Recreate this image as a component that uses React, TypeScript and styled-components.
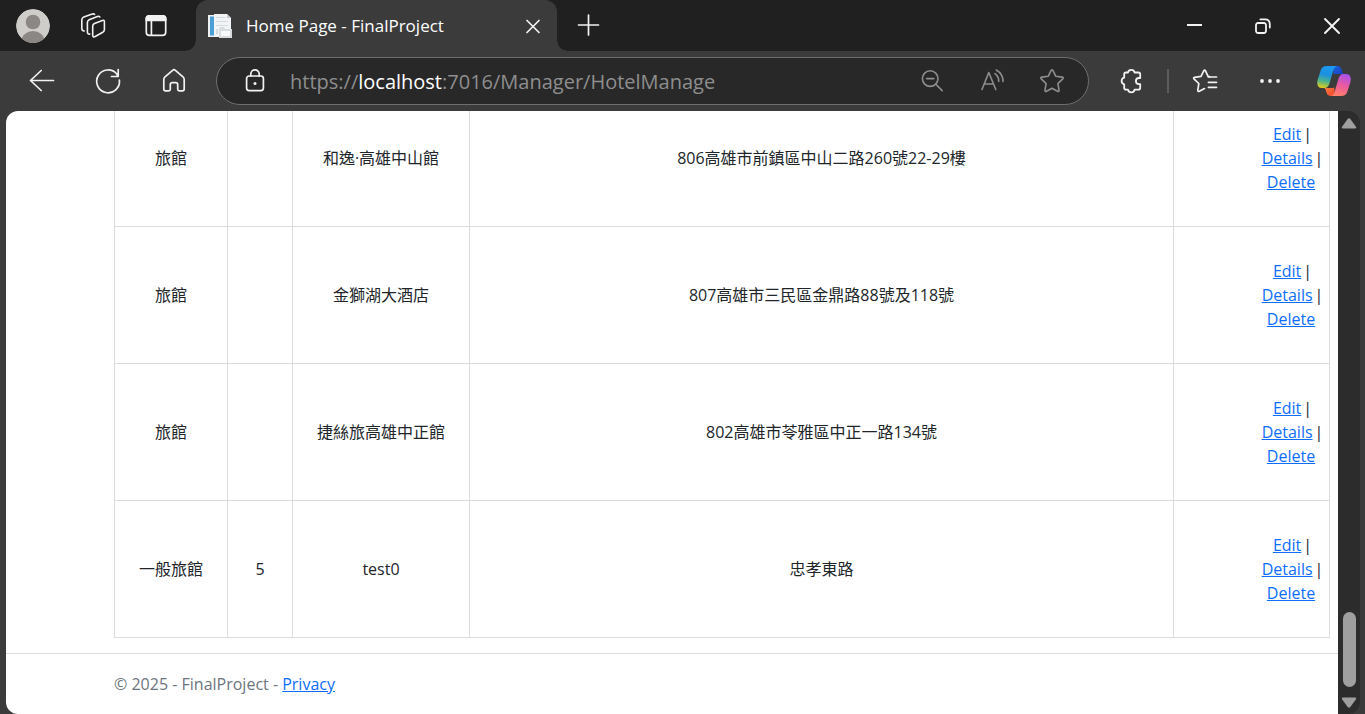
import React from "react";
import styled, { createGlobalStyle } from "styled-components";

const GlobalStyle = createGlobalStyle`
  * { box-sizing: border-box; }
  body {
    margin: 0;
    background: #3b3b3b;
    font-family: "Open Sans", "Noto Sans CJK TC", sans-serif;
    font-size: 16px;
    line-height: 24px;
    color: #212529;
  }
`;

const Browser = styled.div`
  display: flex;
  flex-direction: column;
  height: 100vh;
  overflow: hidden;
  background: #3b3b3b;
`;

const TabStrip = styled.header`
  display: flex;
  align-items: center;
  flex: none;
  height: 51px;
  background: #202020;
`;

const StripTools = styled.div`
  display: flex;
  align-items: center;
  width: 196px;
  height: 51px;
  padding-left: 15px;
  gap: 25px;
`;

const IconButton = styled.button<{ $tone?: string }>`
  display: flex;
  align-items: center;
  justify-content: center;
  flex: none;
  width: 36px;
  height: 36px;
  padding: 0;
  border: 0;
  background: none;
  color: ${(p) => p.$tone ?? "#f2f2f2"};
`;

const Tab = styled.div`
  position: relative;
  display: flex;
  align-items: center;
  width: 361px;
  height: 51px;
  padding: 0 6px;
  border-radius: 12px 12px 0 0;
  background: #3b3b3b;
  &::before,
  &::after {
    content: "";
    position: absolute;
    bottom: 0;
    width: 10px;
    height: 10px;
  }
  &::before {
    left: -10px;
    background: radial-gradient(circle at 0 0, #202020 9px, #3b3b3b 10px);
  }
  &::after {
    right: -10px;
    background: radial-gradient(circle at 100% 0, #202020 9px, #3b3b3b 10px);
  }
`;

const TabTitle = styled.span`
  flex: 1;
  padding-left: 8px;
  font-size: 17px;
  color: #ffffff;
  white-space: nowrap;
`;

const NewTab = styled.div`
  flex: 1;
  padding-left: 14px;
`;

const WindowControls = styled.div`
  display: flex;
  gap: 33px;
  padding-right: 15px;
`;

const Toolbar = styled.nav`
  display: flex;
  align-items: center;
  flex: none;
  height: 60px;
  padding: 0 12px 0 24px;
`;

const NavButtons = styled.div`
  display: flex;
  gap: 30px;
  padding-right: 24px;
`;

const AddressBar = styled.div`
  display: flex;
  align-items: center;
  flex: 1;
  min-width: 0;
  height: 48px;
  padding: 0 18px 0 20px;
  border: 1px solid #6e6e6e;
  border-radius: 24px;
  background: #282828;
`;

const Address = styled.div`
  flex: 1;
  min-width: 0;
  padding: 2px 0 0 17px;
  overflow: hidden;
  font-size: 20px;
  line-height: 28px;
  color: #8e8e8e;
  white-space: nowrap;
`;

const Host = styled.span`
  color: #ffffff;
`;

const AddressTools = styled.div`
  display: flex;
  gap: 24px;
`;

const Extensions = styled.div`
  display: flex;
  align-items: center;
  padding-left: 24px;
`;

const Divider = styled.span`
  width: 2px;
  height: 24px;
  margin: 0 18px;
  background: #5c5c5c;
`;

const MoreTools = styled.div`
  display: flex;
  gap: 29px;
`;

const Viewport = styled.div`
  display: flex;
  flex: 1;
  min-height: 0;
  padding: 0 5px 0 6px;
`;

const Page = styled.div`
  display: flex;
  flex-direction: column;
  justify-content: flex-end;
  flex: 1;
  min-width: 0;
  overflow: hidden;
  border-radius: 12px 0 0 12px;
  background: #ffffff;
`;

const Main = styled.main`
  padding: 0 8px 15px 108px;
`;

const HotelTable = styled.table`
  width: 100%;
  table-layout: fixed;
  border-collapse: collapse;
`;

const Column = styled.col<{ $width?: number }>`
  width: ${(p) => (p.$width ? `${p.$width}px` : "auto")};
`;

const Cell = styled.td`
  padding: 32px 8px;
  border: 1px solid #dcdcdc;
  text-align: center;
  vertical-align: middle;
`;

const Actions = styled.div`
  display: flex;
  flex-direction: column;
  align-items: center;
  width: 60px;
  margin-left: auto;
  white-space: nowrap;
`;

const Separator = styled.span`
  margin: 0 -3px 0 2px;
`;

const Link = styled.a`
  color: #0d6efd;
  text-decoration: underline;
`;

const Footer = styled.footer`
  padding-left: 108px;
  border-top: 1px solid #dcdcdc;
  line-height: 60px;
  color: #6c757d;
`;

const ScrollTrack = styled.div`
  display: flex;
  flex-direction: column;
  align-items: center;
  justify-content: space-between;
  flex: none;
  width: 22px;
  padding: 6px 0 5px;
  border-radius: 0 12px 12px 0;
  background: #2c2c2c;
`;

const ScrollEnd = styled.div`
  display: flex;
  flex-direction: column;
  align-items: center;
  gap: 10px;
`;

const Thumb = styled.div`
  width: 13px;
  height: 75px;
  border-radius: 7px;
  background: #9f9f9f;
`;

/* Icons are drawn around their own centre. */
const Glyph = ({ children, width = 1.7 }: { children: React.ReactNode; width?: number }) => (
  <svg
    width="36"
    height="36"
    viewBox="-18 -18 36 36"
    fill="none"
    stroke="currentColor"
    strokeWidth={width}
    strokeLinecap="round"
    strokeLinejoin="round"
    aria-hidden="true"
  >
    {children}
  </svg>
);

const Avatar = () => (
  <Glyph>
    <clipPath id="avatar"><circle r="17" /></clipPath>
    <g clipPath="url(#avatar)" stroke="none">
      <circle r="17" fill="#cfcdca" />
      <circle cy="-4" r="7.3" fill="#8b8785" />
      <ellipse cy="15" rx="11.5" ry="10" fill="#8b8785" />
    </g>
  </Glyph>
);

const Workspaces = () => (
  <Glyph width={1.6}>
    <g transform="translate(-1 -.5)">
      <path d="M1.5 -2 9.3 -5.1Q11.4 -5.8 11.4 -3.5V4Q11.4 5.8 9.8 6.7L2.2 11Q-.3 12.2 -.3 9.6V.7Q-.3 -1.2 1.5 -2Z" />
      <path d="M6.8 -8.5Q6 -9.6 4.4 -9L-3.8 -5.8Q-5.6 -5 -5.6 -3V6.6Q-5.6 8.8 -3.3 8.6" />
      <path d="M1.6 -11.2Q.7 -12 -.8 -11.4L-9.2 -8.4Q-11.2 -7.6 -11.2 -5.6V3Q-11.2 5.2 -8.8 5.5" />
    </g>
  </Glyph>
);

const VerticalTabs = () => (
  <Glyph>
    <g transform="translate(1 -.5)">
      <rect x="-9.7" y="-9.7" width="19.4" height="19.6" rx="3.2" />
      <path d="M-9.7 -5V-6.5Q-9.7 -9.7 -6.5 -9.7H6.5Q9.7 -9.7 9.7 -6.5V-5Z" fill="currentColor" />
      <path d="M-4.6 -4V9.5" />
    </g>
  </Glyph>
);

const Favicon = () => (
  <Glyph>
    <g stroke="none">
      <path d="M-12 -11H-3V11H-12Z" fill="#eef1f4" />
      <path d="M-10 -9.5H-6V9.5H-10Z" fill="#4a9fd6" />
      <path d="M-6 -12H7L11 -8V11H-6Z" fill="#f2f3f5" />
      <path d="M-4 -9H5V-8H-4ZM-4 -5H8V-4H-4ZM-4 -1H8V0H-4ZM-4 3H-2V8H-4Z" fill="#d5dbe0" />
      <path d="M7 -12V-8H11Z" fill="#c5ccd2" />
      <path d="M-1 3Q-1 1 1 1H4L5 3H12V12H-1Z" fill="#d9dcdf" />
      <path d="M1 5H10V10H1Z" fill="#f8f9fa" />
    </g>
  </Glyph>
);

const CloseTab = () => <Glyph><path d="M-6 -5.5 6 6.5M6 -5.5-6 6.5" /></Glyph>;
const Plus = () => <Glyph><path d="M-10.5 -1H9.5M-.5 -11V9" /></Glyph>;
const Minimize = () => <Glyph width={2}><path d="M-7 -1H8" strokeLinecap="butt" /></Glyph>;
const Restore = () => (
  <Glyph width={1.8}>
    <rect x="-7" y="-3" width="10" height="10" rx="2" />
    <path d="M-2.6 -6.6H2Q6.8 -6.6 6.8 -1.8V1.6" />
  </Glyph>
);
const CloseWindow = () => <Glyph width={1.9}><path d="M-7 -7 7 7M7 -7-7 7" /></Glyph>;
const Back = () => <Glyph><path d="M11.5 -.5H-11.5M-.8 -10.5-11.5 -.5-.8 9.5" /></Glyph>;
const Refresh = () => (
  <Glyph>
    <path d="M11.4 -1A11.4 11.4 0 1 1 8.8 -7L10 -4.7M10.2 -11.5V-4.5H3.5" />
  </Glyph>
);
const Home = () => (
  <Glyph>
    <path d="M-1.4 -10.7Q0 -12 1.4 -10.7L9 -4.2Q10.2 -3.2 10.2 -1.6V8Q10.2 9.8 8.4 9.8H5.3Q3.7 9.8 3.7 8.2V3.6Q3.7 1.6 1.7 1.6H-1.7Q-3.7 1.6 -3.7 3.6V8.2Q-3.7 9.8 -5.3 9.8H-8.4Q-10.2 9.8 -10.2 8V-1.6Q-10.2 -3.2 -9 -4.2Z" />
  </Glyph>
);
const Lock = () => (
  <Glyph>
    <rect x="-8.4" y="-5" width="16.8" height="14.6" rx="2.5" />
    <path d="M-4.2 -5V-7A4.2 4.2 0 0 1 4.2 -7V-5" />
    <circle cy="2.4" r="1.5" fill="currentColor" stroke="none" />
  </Glyph>
);
const ZoomOut = () => (
  <Glyph width={1.6}>
    <circle cx="-1.8" cy="-2.4" r="7.8" />
    <path d="M-5.4 -2.4H1.8M3.8 3.2 10.2 9.6" />
  </Glyph>
);
const ReadAloud = () => (
  <Glyph width={1.6}>
    <path d="M-10 8.5-3.2 -8.5 3.8 8.5M-7.6 3H1.5M3 -7.4Q7 -4.4 6.7 .4M4.3 -11Q11.2 -7 11 .4" />
  </Glyph>
);
const starPath =
  "M-.9 -10.6Q0 -12 .9 -10.6L3.7 -4.8 10.2 -3.9Q12 -3.5 10.7 -2.1L5.9 2.6 7 9.2Q7.1 11 5.5 10.3L0 7.2-5.5 10.3Q-7.1 11 -7 9.2L-5.9 2.6-10.7 -2.1Q-12 -3.5 -10.2 -3.9L-3.7 -4.8Z";
const Star = () => <Glyph width={1.6}><path d={starPath} /></Glyph>;
const Puzzle = () => (
  <Glyph width={1.8}>
    <path d="M-3 -8.5A3.4 3.4 0 0 1 3.6 -8.5H7.4Q9.2 -8.5 9.2 -6.7V-3H8A3 3 0 0 0 8 3.2H9.2V6.8Q9.2 8.7 7.4 8.7H3.6A3.4 3.4 0 0 1 -3 8.7H-5Q-6.8 8.7 -6.8 6.8V3.3A3.4 3.4 0 0 1 -6.8 -3.3V-6.7Q-6.8 -8.5 -5 -8.5Z" />
  </Glyph>
);
const Favorites = () => (
  <Glyph>
    <path d="M4.6 -4.3 3.1 -4.6 .5 -10.2Q-.5 -11.6 -1.3 -10.2L-4 -4.7-10.4 -3.7Q-12.1 -3.2 -10.8 -1.8L-6.2 2.5-7.2 9.2Q-7.2 11 -5.6 10.3L-.5 7.6" />
    <path d="M3.4 -4H11.5M3.4 1.3H11.5M3.4 6.3H11.5" />
  </Glyph>
);
const Dots = () => (
  <Glyph>
    <g fill="currentColor" stroke="none">
      <circle cx="-8" r="1.9" />
      <circle r="1.9" />
      <circle cx="8" r="1.9" />
    </g>
  </Glyph>
);
const Copilot = () => (
  <Glyph>
    <defs>
      <linearGradient id="cool" x1=".3" y1="0" x2=".1" y2="1">
        <stop offset="0" stopColor="#1a9af0" />
        <stop offset=".35" stopColor="#1c8fe0" />
        <stop offset=".65" stopColor="#4cb38c" />
        <stop offset="1" stopColor="#f0d010" />
      </linearGradient>
      <linearGradient id="warm" x1=".7" y1="0" x2=".4" y2="1">
        <stop offset="0" stopColor="#a850ec" />
        <stop offset=".5" stopColor="#ea5aa0" />
        <stop offset="1" stopColor="#ff7f68" />
      </linearGradient>
      <linearGradient id="navy" x1="0" y1="0" x2="1" y2="1">
        <stop offset="0" stopColor="#1b62e0" />
        <stop offset="1" stopColor="#1636b8" />
      </linearGradient>
      <linearGradient id="flame" x1="0" y1="0" x2="1" y2="1">
        <stop offset="0" stopColor="#ff8a3c" />
        <stop offset="1" stopColor="#f0412f" />
      </linearGradient>
    </defs>
    <g stroke="none" transform="translate(-1 0)">
      <path d="M-1 -15H3Q6.5 -15 7.4 -12L8.6 -8Q9 -7 11 -7H4Q1 -7 0 -4Z" fill="url(#navy)" />
      <path d="M1 15H-3Q-6.5 15 -7.4 12L-8.6 8Q-9 7 -11 7H-4Q-1 7 0 4Z" fill="url(#flame)" />
      <path d="M-7 -15H3Q.5 -14.5 -.6 -11L-4.4 2Q-5.8 7 -9.5 7H-12Q-18 7 -16.4 -1L-13.2 -11Q-12 -15 -7 -15Z" fill="url(#cool)" />
      <path d="M7 15H-3Q-.5 14.5 .6 11L4.4 -2Q5.8 -7 9.5 -7H12Q18 -7 16.4 1L13.2 11Q12 15 7 15Z" fill="url(#warm)" />
      <path d="M-1.8 -7H4Q2.6 -5.6 1.8 -3L-1 7H-4.8Q-3.8 5 -3 2Z" transform="translate(.6 0)" fill="#3b3b3b" />
    </g>
  </Glyph>
);

const ScrollArrow = ({ down }: { down?: boolean }) => (
  <svg width="16" height="12" viewBox="0 0 16 12" fill="#9f9f9f" aria-hidden="true">
    <path
      d={
        down
          ? "M2 .5H14Q16 .8 14.8 2.6L9.5 9.8Q8 11.8 6.5 9.8L1.2 2.6Q0 .8 2 .5Z"
          : "M2 11.5H14Q16 11.2 14.8 9.4L9.5 2.2Q8 .2 6.5 2.2L1.2 9.4Q0 11.2 2 11.5Z"
      }
    />
  </svg>
);

const hotels = [
  { kind: "旅館", star: "", name: "和逸·高雄中山館", address: "806高雄市前鎮區中山二路260號22-29樓" },
  { kind: "旅館", star: "", name: "金獅湖大酒店", address: "807高雄市三民區金鼎路88號及118號" },
  { kind: "旅館", star: "", name: "捷絲旅高雄中正館", address: "802高雄市苓雅區中正一路134號" },
  { kind: "一般旅館", star: "5", name: "test0", address: "忠孝東路" },
];

export default function App() {
  return (
    <Browser>
      <GlobalStyle />
      <TabStrip>
        <StripTools>
          <IconButton aria-label="Profile"><Avatar /></IconButton>
          <IconButton aria-label="Workspaces"><Workspaces /></IconButton>
          <IconButton aria-label="Tab actions"><VerticalTabs /></IconButton>
        </StripTools>
        <Tab>
          <Favicon />
          <TabTitle>Home Page - FinalProject</TabTitle>
          <IconButton aria-label="Close tab"><CloseTab /></IconButton>
        </Tab>
        <NewTab>
          <IconButton aria-label="New tab"><Plus /></IconButton>
        </NewTab>
        <WindowControls>
          <IconButton aria-label="Minimize"><Minimize /></IconButton>
          <IconButton aria-label="Restore"><Restore /></IconButton>
          <IconButton aria-label="Close"><CloseWindow /></IconButton>
        </WindowControls>
      </TabStrip>
      <Toolbar>
        <NavButtons>
          <IconButton aria-label="Back"><Back /></IconButton>
          <IconButton aria-label="Refresh"><Refresh /></IconButton>
          <IconButton aria-label="Home"><Home /></IconButton>
        </NavButtons>
        <AddressBar>
          <IconButton aria-label="Site information"><Lock /></IconButton>
          <Address role="textbox" aria-label="Address" tabIndex={0}>
            https://<Host>localhost</Host>:7016/Manager/HotelManage
          </Address>
          <AddressTools>
            <IconButton $tone="#8e8e8e" aria-label="Zoom out"><ZoomOut /></IconButton>
            <IconButton $tone="#8e8e8e" aria-label="Read aloud"><ReadAloud /></IconButton>
            <IconButton $tone="#8e8e8e" aria-label="Add to favorites"><Star /></IconButton>
          </AddressTools>
        </AddressBar>
        <Extensions>
          <IconButton aria-label="Extensions"><Puzzle /></IconButton>
          <Divider />
          <MoreTools>
            <IconButton aria-label="Favorites"><Favorites /></IconButton>
            <IconButton aria-label="Settings and more"><Dots /></IconButton>
            <IconButton aria-label="Copilot"><Copilot /></IconButton>
          </MoreTools>
        </Extensions>
      </Toolbar>
      <Viewport>
        <Page>
          <Main>
            <HotelTable>
              <colgroup>
                <Column $width={113} />
                <Column $width={65} />
                <Column $width={177} />
                <Column />
                <Column $width={156} />
              </colgroup>
              <tbody>
                {hotels.map((hotel) => (
                  <tr key={hotel.name}>
                    <Cell>{hotel.kind}</Cell>
                    <Cell>{hotel.star}</Cell>
                    <Cell>{hotel.name}</Cell>
                    <Cell>{hotel.address}</Cell>
                    <Cell>
                      <Actions>
                        <span><Link href="#edit">Edit</Link><Separator>|</Separator></span>
                        <span><Link href="#details">Details</Link><Separator>|</Separator></span>
                        <Link href="#delete">Delete</Link>
                      </Actions>
                    </Cell>
                  </tr>
                ))}
              </tbody>
            </HotelTable>
          </Main>
          <Footer>
            © 2025 - FinalProject - <Link href="#privacy">Privacy</Link>
          </Footer>
        </Page>
        <ScrollTrack>
          <ScrollArrow />
          <ScrollEnd>
            <Thumb />
            <ScrollArrow down />
          </ScrollEnd>
        </ScrollTrack>
      </Viewport>
    </Browser>
  );
}
